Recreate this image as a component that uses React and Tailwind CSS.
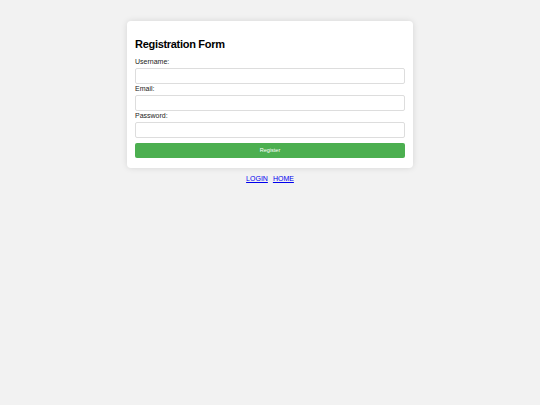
import React from 'react';

const Field = ({ label, type }) => (
  <div className="flex flex-col">
    <label className="text-[7px] leading-[10px] text-[#222]">{label}</label>
    <input
      type={type}
      className="mt-[1px] h-[16px] w-full rounded-[2px] border border-[#ddd] bg-white outline-none"
    />
  </div>
);

const App = () => {
  return (
    <div
      className="min-h-screen w-full bg-[#f2f2f2] pt-[21px]"
      style={{ fontFamily: '"Liberation Sans", Arial, sans-serif' }}
    >
      <div className="mx-auto w-[286px] rounded-[4px] bg-white px-[8px] pt-[16px] pb-[10px] shadow-[0_0_6px_rgba(0,0,0,0.12)]">
        <h2 className="text-[11px] font-bold leading-[14px] tracking-[-0.3px] text-black">Registration Form</h2>
        <form className="mt-[6px] flex flex-col" onSubmit={(e) => e.preventDefault()}>
          <Field label="Username:" type="text" />
          <Field label="Email:" type="email" />
          <Field label="Password:" type="password" />
          <button
            type="submit"
            className="mt-[5px] h-[15px] w-full rounded-[2px] bg-[#4caf50] text-[5.5px] text-white"
          >
            Register
          </button>
        </form>
      </div>
      <div className="mt-[6px] flex justify-center gap-[5px] text-[7px] leading-[10px]">
        <a href="#" className="text-[#0000ee] underline">LOGIN</a>
        <a href="#" className="text-[#0000ee] underline">HOME</a>
      </div>
    </div>
  );
};

export default App;
